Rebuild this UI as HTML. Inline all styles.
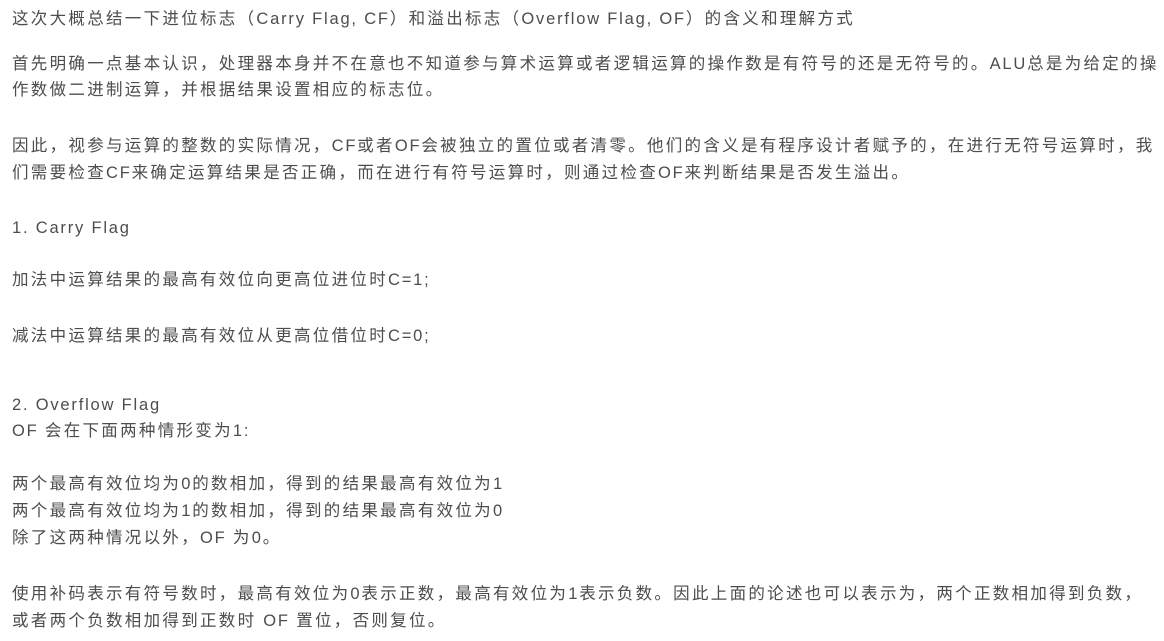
<!DOCTYPE html>
<html><head><meta charset="utf-8"><style>
body{margin:0;background:#fff;width:1164px;height:641px;overflow:hidden;position:relative}
div{position:absolute;left:12px;white-space:nowrap;font-family:"Liberation Sans","Noto Sans CJK SC",sans-serif;font-size:16.5px;letter-spacing:2.3px;line-height:26px;color:#4d4d4d}
i{font-style:normal;letter-spacing:1.8px}
</style></head><body>
<div style="top:6px">这次大概总结一下进位标志（<i>Carry Flag, CF</i>）和溢出标志（<i>Overflow Flag, OF</i>）的含义和理解方式</div>
<div style="top:51px">首先明确一点基本认识，处理器本身并不在意也不知道参与算术运算或者逻辑运算的操作数是有符号的还是无符号的。<i>ALU</i>总是为给定的操</div>
<div style="top:77px">作数做二进制运算，并根据结果设置相应的标志位。</div>
<div style="top:133px">因此，视参与运算的整数的实际情况，<i>CF</i>或者<i>OF</i>会被独立的置位或者清零。他们的含义是有程序设计者赋予的，在进行无符号运算时，我</div>
<div style="top:160px">们需要检查<i>CF</i>来确定运算结果是否正确，而在进行有符号运算时，则通过检查<i>OF</i>来判断结果是否发生溢出。</div>
<div style="top:215px"><i>1. Carry Flag</i></div>
<div style="top:267px">加法中运算结果的最高有效位向更高位进位时<i>C=1;</i></div>
<div style="top:323px">减法中运算结果的最高有效位从更高位借位时<i>C=0;</i></div>
<div style="top:392px"><i>2. Overflow Flag</i></div>
<div style="top:418px"><i>OF </i>会在下面两种情形变为<i>1:</i></div>
<div style="top:471px">两个最高有效位均为<i>0</i>的数相加，得到的结果最高有效位为<i>1</i></div>
<div style="top:498px">两个最高有效位均为<i>1</i>的数相加，得到的结果最高有效位为<i>0</i></div>
<div style="top:525px">除了这两种情况以外，<i>OF </i>为<i>0</i>。</div>
<div style="top:581px">使用补码表示有符号数时，最高有效位为<i>0</i>表示正数，最高有效位为<i>1</i>表示负数。因此上面的论述也可以表示为，两个正数相加得到负数，</div>
<div style="top:608px">或者两个负数相加得到正数时 <i>OF </i>置位，否则复位。</div>
</body></html>
